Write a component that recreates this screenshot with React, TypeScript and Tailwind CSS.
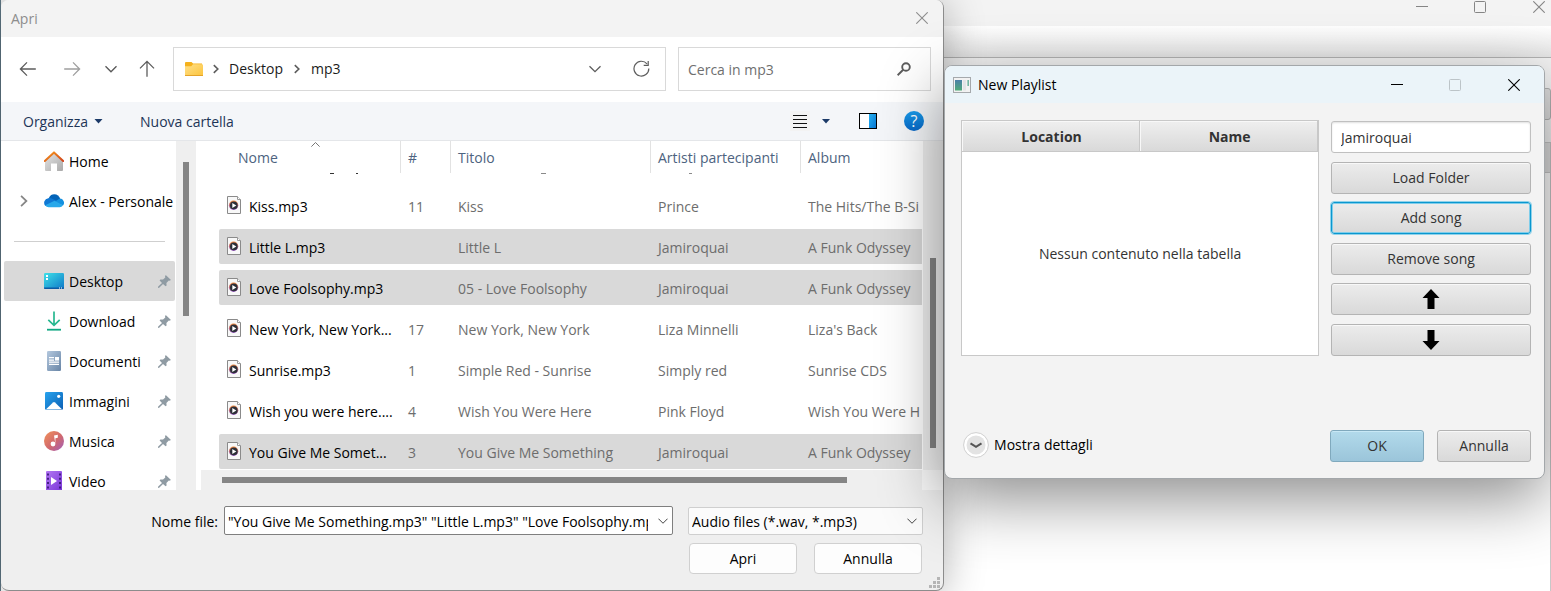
import React from 'react';

type Song = {
  name: string;
  track: string;
  title: string;
  artist: string;
  album: string;
  selected?: boolean;
};

const songs: Song[] = [
  { name: 'Kiss.mp3', track: '11', title: 'Kiss', artist: 'Prince', album: 'The Hits/The B-Si' },
  { name: 'Little L.mp3', track: '', title: 'Little L', artist: 'Jamiroquai', album: 'A Funk Odyssey', selected: true },
  { name: 'Love Foolsophy.mp3', track: '', title: '05 - Love Foolsophy', artist: 'Jamiroquai', album: 'A Funk Odyssey', selected: true },
  { name: 'New York, New York...', track: '17', title: 'New York, New York', artist: 'Liza Minnelli', album: "Liza's Back" },
  { name: 'Sunrise.mp3', track: '1', title: 'Simple Red - Sunrise', artist: 'Simply red', album: 'Sunrise CDS' },
  { name: 'Wish you were here....', track: '4', title: 'Wish You Were Here', artist: 'Pink Floyd', album: 'Wish You Were H' },
  { name: 'You Give Me Somet...', track: '3', title: 'You Give Me Something', artist: 'Jamiroquai', album: 'A Funk Odyssey', selected: true },
];

function HomeIcon() {
  return (
    <svg width="20" height="20" viewBox="0 0 20 20" aria-hidden="true">
      <defs>
        <linearGradient id="homeWall" x1="0" y1="0" x2="1" y2="1">
          <stop offset="0" stopColor="#e6e6e6" />
          <stop offset="1" stopColor="#a9a9a9" />
        </linearGradient>
        <linearGradient id="homeRoof" x1="0" y1="0" x2="1" y2="1">
          <stop offset="0" stopColor="#f79a1c" />
          <stop offset="1" stopColor="#d1421b" />
        </linearGradient>
      </defs>
      <path d="M1 9 10 1.5 19 9V19a1 1 0 0 1-1 1H13V12.5H7V20H2a1 1 0 0 1-1-1Z" fill="url(#homeWall)" />
      <path d="M.8 10 10 1.4 19.2 10" fill="none" stroke="url(#homeRoof)" strokeWidth="2" strokeLinejoin="round" strokeLinecap="round" />
    </svg>
  );
}

function CloudIcon() {
  return (
    <svg width="20" height="20" viewBox="0 0 20 20" aria-hidden="true">
      <path d="M4.5 7.5C6 4 8 3.2 10.2 3.2c3 0 5.2 1.8 6 4.6L11 12Z" fill="#0364b8" />
      <path d="M4.2 7.2A4.6 4.6 0 0 0 1.5 15L13 10 8.2 7.7A6 6 0 0 0 4.2 7.2Z" fill="#0f78d4" />
      <path d="M11 10.5 15.8 7.6A4.2 4.2 0 0 1 19 14.5L13 12Z" fill="#1490df" />
      <path d="M1.2 14.2 10.5 9.8 18.9 14.3C18.2 15.6 17 16.2 15.7 16.2H4.6c-1.5 0-2.7-.8-3.4-2Z" fill="#28a8ea" />
    </svg>
  );
}

function DesktopIcon() {
  return (
    <svg width="20" height="20" viewBox="0 0 20 20" aria-hidden="true">
      <defs>
        <linearGradient id="desk" x1="0" y1="0" x2="1" y2="1">
          <stop offset="0" stopColor="#3fe0e8" />
          <stop offset="1" stopColor="#0e78c8" />
        </linearGradient>
      </defs>
      <rect y="2" width="20" height="16" rx="1.2" fill="url(#desk)" />
      <path d="M2 4h2v2H2ZM2 7h2v2H2Z" fill="#fff" />
      <path d="M0 16.6h20v.4a1 1 0 0 1-1 1H1a1 1 0 0 1-1-1Z" fill="#0a5aa5" />
      <path d="M15 16.6h1v1h-1zM17 16.6h1v1h-1z" fill="#fff" />
    </svg>
  );
}

function DownloadIcon() {
  return (
    <svg width="20" height="20" viewBox="0 0 20 20" aria-hidden="true">
      <path d="M10 .5V14M4.3 8.8 10 14.4l5.7-5.6" fill="none" stroke="#27b890" strokeWidth="1.7" />
      <path d="M3 18.7h14" stroke="#12a883" strokeWidth="1.8" />
    </svg>
  );
}

function DocumentIcon() {
  return (
    <svg width="20" height="20" viewBox="0 0 20 20" aria-hidden="true">
      <defs>
        <linearGradient id="docs" x1="0" y1="0" x2="1" y2="1">
          <stop offset="0" stopColor="#b4c8de" />
          <stop offset="1" stopColor="#6885a6" />
        </linearGradient>
      </defs>
      <rect x="3" y="0" width="14" height="20" rx="1.2" fill="url(#docs)" />
      <path d="M5 6.7h5M5 9.2h5M5 11.2h10M5 13.3h10" stroke="#fff" strokeWidth="1.2" />
      <rect x="11" y="6" width="4" height="3.6" fill="#fff" />
    </svg>
  );
}

function PictureIcon() {
  return (
    <svg width="20" height="20" viewBox="0 0 20 20" aria-hidden="true">
      <defs>
        <linearGradient id="pics" x1="0" y1="0" x2="1" y2="1">
          <stop offset="0" stopColor="#27a3ee" />
          <stop offset="1" stopColor="#0b5fb4" />
        </linearGradient>
      </defs>
      <rect x="1" y="1" width="18" height="18" rx="1.4" fill="url(#pics)" />
      <path d="M1.8 18.6 9 11.4q1-.9 2 0l7.2 7.2Z" fill="#fff" />
      <circle cx="14.7" cy="5.3" r="1.6" fill="#fff" />
    </svg>
  );
}

function MusicIcon() {
  return (
    <svg width="20" height="20" viewBox="0 0 20 20" aria-hidden="true">
      <defs>
        <linearGradient id="music" x1="0" y1="0" x2="1" y2="1">
          <stop offset="0" stopColor="#f2925a" />
          <stop offset=".55" stopColor="#d0686e" />
          <stop offset="1" stopColor="#a05fc0" />
        </linearGradient>
      </defs>
      <circle cx="10" cy="10" r="10" fill="url(#music)" />
      <path d="M10 4.6 13.8 3.8V6.8L11.4 7.3V13" fill="#fff" />
      <circle cx="9" cy="13" r="2.4" fill="#fff" />
    </svg>
  );
}

function VideoIcon() {
  return (
    <svg width="20" height="20" viewBox="0 0 20 20" aria-hidden="true">
      <defs>
        <linearGradient id="video" x1="0" y1="0" x2="1" y2="1">
          <stop offset="0" stopColor="#b277f2" />
          <stop offset="1" stopColor="#7a35d8" />
        </linearGradient>
      </defs>
      <rect x="2" y="0" width="16" height="20" rx="1" fill="url(#video)" />
      <path d="M4 2.5V18M16 2.5V18" stroke="#3b1a78" strokeWidth="1.8" strokeDasharray="2 2.3" />
      <path d="M7 6v8l6-4Z" fill="#fff" />
    </svg>
  );
}

function PinIcon() {
  return (
    <svg width="13" height="13" viewBox="0 0 13 13" aria-hidden="true">
      <path d="M7.7 0 13 5 11.4 5.7 10.8 5.5 8.4 8 8.6 10.4 7.6 11.2 5 8.9 1.2 12.8 0 12.9.2 11.6 4 8 1.6 5.4 2.4 4.5 5 4.6 7.3 2.4 7 1.5Z" fill="#8f9ba3" />
    </svg>
  );
}

const places = [
  { label: 'Desktop', icon: <DesktopIcon />, active: true },
  { label: 'Download', icon: <DownloadIcon />, active: false },
  { label: 'Documenti', icon: <DocumentIcon />, active: false },
  { label: 'Immagini', icon: <PictureIcon />, active: false },
  { label: 'Musica', icon: <MusicIcon />, active: false },
  { label: 'Video', icon: <VideoIcon />, active: false },
];

function SongIcon() {
  return (
    <svg className="shrink-0" width="14" height="18" viewBox="0 0 14 18" aria-hidden="true">
      <defs>
        <linearGradient id="disc" x1="0" y1="0" x2="0" y2="1">
          <stop offset="0" stopColor="#f08a3c" />
          <stop offset="1" stopColor="#8d4fc0" />
        </linearGradient>
      </defs>
      <path d="M.5.5h10l3 3v14H.5Z" fill="#f8f8f8" stroke="#8a8a8a" />
      <path d="M10.5.5v3h3" fill="#fff" stroke="#9a9a9a" />
      <circle cx="6.6" cy="9.3" r="4.7" fill="url(#disc)" />
      <circle cx="6.8" cy="9.4" r="3.8" fill="#2c3038" />
      <path d="M5.3 6.9v5l4-2.5Z" fill="#fff" />
    </svg>
  );
}

function Chevron({ className, d, size = 12, w = 1.2 }: { className?: string; d: string; size?: number; w?: number }) {
  return (
    <svg className={className} width={size} height={size} viewBox="0 0 12 12" fill="none" stroke="currentColor" strokeWidth={w} aria-hidden="true">
      <path d={d} />
    </svg>
  );
}

const DOWN = 'M.5 3.2 6 8.7l5.5-5.5';
const RIGHT = 'M3.8 2.2 7.8 6l-4 3.8';

function CloseIcon() {
  return (
    <svg width="12" height="12" viewBox="0 0 12 12" stroke="currentColor" strokeWidth="1.1" aria-hidden="true">
      <path d="M.3.3l11.4 11.4M11.7.3.3 11.7" />
    </svg>
  );
}

function Sidebar() {
  return (
    <div className="flex w-[195px] shrink-0 bg-white">
      <nav aria-label="Percorsi" className="w-[175px] overflow-hidden pr-px pl-[3px]">
        <a href="#home" className="flex h-10 items-center pl-10">
          <HomeIcon />
          <span className="pt-0.5 pl-[5px]">Home</span>
        </a>
        <a href="#personale" className="flex h-10 items-center pl-3">
          <Chevron className="mr-3 text-[#858585]" size={16} w={1.3} d={RIGHT} />
          <CloudIcon />
          <span className="pt-0.5 pl-[5px] whitespace-nowrap">Alex - Personale</span>
        </a>
        <div className="flex h-10 items-center pr-[10px] pl-[10px]">
          <hr className="w-full border-[#cfcfcf]" />
        </div>
        {places.map((p) => (
          <a
            key={p.label}
            href={'#' + p.label.toLowerCase()}
            className={p.active ? 'flex h-10 items-center rounded-[2px] bg-[#d9d9d9] pr-1 pl-10' : 'flex h-10 items-center pr-1 pl-10'}
          >
            {p.icon}
            <span className="flex-1 pt-0.5 pl-[5px]">{p.label}</span>
            <PinIcon />
          </a>
        ))}
      </nav>
      <div className="flex w-5 justify-center bg-[#efefef] pt-[21px]">
        <div className="h-[154px] w-1.5 bg-[#858585]" />
      </div>
    </div>
  );
}

function FileTable() {
  const head = 'h-8 border-r border-[#e2e2e2] p-0 pt-0.5 pl-[7px] text-left font-normal text-[#4d6380]';
  const cell = 'flex h-[35px] items-center pt-0.5 pl-[7px] whitespace-nowrap overflow-hidden text-[#6d6d6d]';
  return (
    <table className="w-full table-fixed border-separate border-spacing-0">
      <colgroup>
        <col className="w-[182px]" />
        <col className="w-[50px]" />
        <col className="w-[200px]" />
        <col className="w-[150px]" />
        <col />
      </colgroup>
      <thead>
        <tr>
          <th className="relative h-8 border-r border-[#e2e2e2] p-0 pt-0.5 pl-[19px] text-left font-normal text-[#4d6380]">
            Nome
            <Chevron className="absolute top-0 left-[92px] text-[#666]" size={9} d="M.5 7.5 6 2l5.5 5.5" />
          </th>
          <th className={head}>#</th>
          <th className={head}>Titolo</th>
          <th className={head}>Artisti partecipanti</th>
          <th className="h-8 p-0 pt-0.5 pl-[7px] text-left font-normal text-[#4d6380]">Album</th>
        </tr>
      </thead>
      <tbody>
        <tr aria-hidden="true">
          <td colSpan={5} className="h-[15px] p-0 align-top">
            <svg className="block" width="480" height="2" viewBox="0 0 480 2">
              <path d="M111 .5h4M137 .5h2" stroke="#333" />
              <path d="M322 .5h5M470 .5h3" stroke="#8a8a8a" />
            </svg>
          </td>
        </tr>
        {songs.map((s) => {
          const bg = s.selected ? ' bg-[#d9d9d9]' : '';
          return (
            <tr key={s.name}>
              <td className="p-0 pb-1.5">
                <div className={'flex h-[35px] items-center gap-2 overflow-hidden rounded-l-[2px] pb-0.5 pl-2 whitespace-nowrap' + bg}>
                  <SongIcon />
                  <span className="pt-1">{s.name}</span>
                </div>
              </td>
              <td className="p-0 pb-1.5"><div className={cell + bg}>{s.track}</div></td>
              <td className="p-0 pb-1.5"><div className={cell + bg}>{s.title}</div></td>
              <td className="p-0 pb-1.5"><div className={cell + bg}>{s.artist}</div></td>
              <td className="p-0 pb-1.5"><div className={cell + bg}>{s.album}</div></td>
            </tr>
          );
        })}
      </tbody>
    </table>
  );
}

function OpenDialog() {
  return (
    <section
      aria-label="Apri"
      className="absolute top-0 left-px flex w-[60.8%] min-w-[780px] flex-col overflow-hidden rounded-lg border-r border-b border-[#8c8c8c] bg-[#efefef] shadow-[0_4px_40px_rgba(0,0,0,0.3)]"
    >
      <header className="flex h-[37px] items-center justify-between bg-[#f3f3f3] pr-[15px] pb-0.5 pl-2.5 text-[#8d8d8d]">
        <h1 className="pt-0.5">Apri</h1>
        <button type="button" aria-label="Chiudi"><CloseIcon /></button>
      </header>

      <div className="flex h-[65px] items-center bg-white pr-3 pb-0.5 pl-[18px] text-[#5c5c5c]">
        <button type="button" aria-label="Indietro">
          <svg width="18" height="18" viewBox="0 0 18 18" fill="none" stroke="currentColor" strokeWidth="1.3"><path d="M16.8 9H1.5M8 2.4 1.4 9 8 15.6" /></svg>
        </button>
        <button type="button" aria-label="Avanti" className="ml-[26px] text-[#9f9f9f]">
          <svg width="18" height="18" viewBox="0 0 18 18" fill="none" stroke="currentColor" strokeWidth="1.3"><path d="M1.2 9h15.3M10 2.4 16.6 9 10 15.6" /></svg>
        </button>
        <button type="button" aria-label="Percorsi recenti" className="ml-6">
          <Chevron d={DOWN} w={1.4} />
        </button>
        <button type="button" aria-label="Su" className="ml-[21px]">
          <svg width="18" height="18" viewBox="0 0 18 18" fill="none" stroke="currentColor" strokeWidth="1.3"><path d="M9 16.8V1.5M2 8.4 9 1.4l7 7" /></svg>
        </button>
        <div className="ml-[17px] flex h-11 flex-1 items-center border border-[#d9d9d9] pr-[15px] pl-[11px]">
          <svg width="18" height="16" viewBox="0 0 18 16" aria-hidden="true">
            <defs>
              <linearGradient id="folder" x1="0" y1="0" x2="1" y2="1">
                <stop offset="0" stopColor="#ffe08a" />
                <stop offset="1" stopColor="#fcc43c" />
              </linearGradient>
            </defs>
            <path d="M0 2a1 1 0 0 1 1-1h5.5l1.6 1.6H17v5H0Z" fill="#f5b11c" />
            <path d="M0 5.2h6.3L8 3.2h9a1 1 0 0 1 1 1V14a1 1 0 0 1-1 1H1a1 1 0 0 1-1-1Z" fill="url(#folder)" />
            <path d="M0 14.5h18" stroke="#e4a32a" />
          </svg>
          <Chevron className="mx-[7px]" size={12} w={1.6} d={RIGHT} />
          <a href="#desktop" className="text-[#1b1b1b]">Desktop</a>
          <Chevron className="mx-2" size={12} w={1.6} d={RIGHT} />
          <a href="#mp3" className="flex-1 text-[#1b1b1b]">mp3</a>
          <button type="button" aria-label="Posizioni precedenti"><Chevron d={DOWN} w={1.3} /></button>
          <button type="button" aria-label="Aggiorna" className="ml-8">
            <svg width="17" height="17" viewBox="0 0 17 17" fill="none" stroke="currentColor" strokeWidth="1.2"><path d="M15.8 8.6A7.4 7.4 0 1 1 14 3.8M15.2 1v4.4h-4.5" /></svg>
          </button>
        </div>
        <label className="ml-3 flex h-11 w-[253px] items-center border border-[#d9d9d9] pr-[19px] pl-[9px]">
          <input type="search" placeholder="Cerca in mp3" aria-label="Cerca in mp3" className="min-w-0 flex-1 bg-transparent pt-0.5 outline-none placeholder:text-[#6f6f6f]" />
          <svg width="14" height="14" viewBox="0 0 14 14" fill="none" stroke="currentColor" strokeWidth="1.9" aria-hidden="true"><circle cx="9" cy="5" r="3.8" /><path d="M6.2 7.8.6 13.2" /></svg>
        </label>
      </div>

      <div className="flex h-[39px] items-center border-b border-[#e4e6e9] bg-[#f4f6f9] pr-[19px] pl-[22px] text-[#1d3557]">
        <button type="button" className="flex items-center gap-[6px]">
          <span className="pt-0.5">Organizza</span>
          <svg width="9" height="5" viewBox="0 0 9 5" aria-hidden="true"><path d="M.5 0h8l-4 4.6Z" fill="#1b3a68" /></svg>
        </button>
        <button type="button" className="ml-[37px] pt-0.5">Nuova cartella</button>
        <button type="button" aria-label="Visualizzazione" className="ml-auto flex h-5 w-5 items-center justify-center bg-[#f3f3f3]">
          <svg width="14" height="14" viewBox="0 0 14 14" aria-hidden="true"><path d="M0 1.5h14M0 5.5h14M0 9.5h14M0 13.5h14" stroke="#111" /></svg>
        </button>
        <button type="button" aria-label="Altre opzioni" className="ml-3">
          <svg width="8" height="5" viewBox="0 0 8 5" aria-hidden="true"><path d="M0 0h8L4 4.4Z" fill="#1b3a68" /></svg>
        </button>
        <button type="button" aria-label="Riquadro anteprima" className="ml-[29px]">
          <svg width="18" height="16" viewBox="0 0 18 16" aria-hidden="true">
            <defs>
              <linearGradient id="pane" x1="0" y1="0" x2="1" y2="1">
                <stop offset="0" stopColor="#25b0f0" />
                <stop offset="1" stopColor="#0a78d4" />
              </linearGradient>
            </defs>
            <rect x=".5" y=".5" width="17" height="15" fill="#fff" stroke="#000" />
            <rect x="10" y="1" width="7" height="14" fill="url(#pane)" />
          </svg>
        </button>
        <button type="button" aria-label="Guida" className="ml-[27px] flex h-5 w-5 items-center justify-center rounded-full bg-linear-to-b from-[#1a9bea] to-[#0968c8] text-base text-white">?</button>
      </div>

      <div className="flex h-[349px]">
        <Sidebar />
        <div className="flex min-w-0 flex-1 flex-col bg-white pl-[5px]">
          <div className="flex min-h-0 flex-1">
            <div className="min-w-0 flex-1 overflow-hidden pl-[18px]">
              <FileTable />
            </div>
            <div className="ml-px flex w-5 justify-center bg-[#efefef] pt-[117px]">
              <div className="h-[190px] w-1.5 bg-[#858585]" />
            </div>
          </div>
          <div className="flex h-5 bg-[#efefef]">
            <div className="flex flex-1 items-center pr-[75px] pl-[21px]">
              <div className="h-1.5 w-full bg-[#858585]" />
            </div>
            <div className="w-[21px] bg-[#fafafa]" />
          </div>
        </div>
      </div>

      <footer className="relative flex h-[100px] flex-col items-end pt-4 pr-5">
        <div className="flex w-full items-center justify-end">
          <label htmlFor="filename" className="mr-1.5 pt-0.5 text-black">Nome file:</label>
          <div className="flex h-[29px] w-[449px] items-center rounded-[2px] border border-[#7f7f7f] bg-white pr-1 pl-[3px]">
            <input
              id="filename"
              type="text"
              defaultValue={'"You Give Me Something.mp3" "Little L.mp3" "Love Foolsophy.mp3"'}
              className="mr-2.5 min-w-0 flex-1 bg-transparent pt-0.5 text-black outline-none"
            />
            <button type="button" aria-label="Mostra nomi recenti"><Chevron className="text-[#444]" size={10} d={DOWN} /></button>
          </div>
          <div className="relative ml-[15px] w-[235px]">
            <select aria-label="Tipo file" className="h-7 w-full appearance-none rounded-[2px] border border-[#cfcfcf] bg-[#fbfbfb] pt-0.5 pl-[3px] text-black outline-none">
              <option>Audio files (*.wav, *.mp3)</option>
            </select>
            <Chevron className="pointer-events-none absolute top-[9px] right-1.5 text-[#444]" size={10} d={DOWN} />
          </div>
        </div>
        <div className="mt-2 mr-px flex gap-[17px]">
          <button type="button" className="h-[31px] w-[108px] rounded-[4px] border border-[#d0d0d0] bg-[#fdfdfd] text-black">Apri</button>
          <button type="button" className="h-[31px] w-[108px] rounded-[4px] border border-[#d0d0d0] bg-[#fdfdfd] text-black">Annulla</button>
        </div>
        <svg className="absolute right-0.5 bottom-px" width="12" height="12" viewBox="0 0 12 12" aria-hidden="true">
          <path d="M8 0h3v3H8zM4 4h3v3H4zM8 4h3v3H8zM0 8h3v3H0zM4 8h3v3H4zM8 8h3v3H8z" fill="#b5b5b5" />
        </svg>
      </footer>
    </section>
  );
}

const fxButton =
  'flex h-8 w-full items-center justify-center rounded-[3px] border border-[#b4b4b4] bg-linear-to-b from-[#ececec] to-[#d9d9d9] text-[#333] inset-shadow-[0_1px_0_#f8f8f8]';

function BlockArrow({ up = false }: { up?: boolean }) {
  return (
    <svg width="18" height="20" viewBox="0 0 18 20" aria-hidden="true">
      <path d={up ? 'M9 0 17.5 9H12.5V20H5.5V9H.5Z' : 'M9 20 17.5 11H12.5V0H5.5V11H.5Z'} fill="#000" />
    </svg>
  );
}

function PlaylistDialog() {
  return (
    <section
      aria-label="New Playlist"
      className="absolute top-[65px] left-[60.87%] flex w-[38.75%] min-w-[480px] flex-col overflow-hidden rounded-lg border border-[#a3a7aa] bg-[#f3f3f3] shadow-[0_20px_64px_rgba(0,0,0,0.45)]"
    >
      <header className="flex h-[37px] items-center bg-[#ebf4f9] pr-[24px] pl-2 text-black">
        <svg width="18" height="16" viewBox="0 0 18 16" aria-hidden="true">
          <defs>
            <linearGradient id="app" x1="0" y1="0" x2="0" y2="1">
              <stop offset="0" stopColor="#4a80a8" />
              <stop offset="1" stopColor="#4faa78" />
            </linearGradient>
          </defs>
          <rect x=".5" y=".5" width="17" height="15" fill="#f2f2f2" stroke="#a5a9ac" />
          <rect x="2" y="3" width="7" height="10.5" fill="url(#app)" />
          <rect x="10" y="3" width="3" height="10.5" fill="#e2e4e6" />
          <rect x="14.5" y="3" width="1.3" height="6" fill="#58a890" />
        </svg>
        <h2 className="flex-1 pl-[7px]">New Playlist</h2>
        <button type="button" aria-label="Riduci a icona">
          <svg width="12" height="12" viewBox="0 0 12 12"><path d="M0 5.5h12" stroke="#000" /></svg>
        </button>
        <button type="button" aria-label="Ingrandisci" disabled className="ml-[46px]">
          <svg width="12" height="12" viewBox="0 0 12 12"><rect x=".5" y=".5" width="11" height="11" rx="1" fill="none" stroke="#bcc4c8" /></svg>
        </button>
        <button type="button" aria-label="Chiudi" className="ml-[47px]"><CloseIcon /></button>
      </header>

      <div className="flex gap-3 pt-[17px] pr-[13px] pl-4">
        <div className="flex h-[236px] min-w-0 flex-1 flex-col border border-[#c8c8c8] bg-white">
          <table className="w-full table-fixed border-separate border-spacing-0">
            <thead>
              <tr className="text-[#333]">
                <th className="h-[31px] border-r border-b border-[#c8c8c8] bg-linear-to-b from-[#efefef] to-[#d9d9d9] p-0 pt-0.5 pl-0.5 font-bold inset-shadow-[1px_1px_0_#f8f8f8]">Location</th>
                <th className="h-[31px] border-r border-b border-[#c8c8c8] bg-linear-to-b from-[#efefef] to-[#d9d9d9] p-0 pt-0.5 pl-0.5 font-bold inset-shadow-[1px_1px_0_#f8f8f8]">Name</th>
              </tr>
            </thead>
          </table>
          <p className="flex flex-1 items-center justify-center text-[#333]">Nessun contenuto nella tabella</p>
        </div>
        <div className="flex w-[200px] shrink-0 flex-col justify-between pt-px">
          <input
            type="text"
            aria-label="Nome playlist"
            defaultValue="Jamiroquai"
            className="h-8 w-full rounded-[3px] border border-[#c0c0c0] bg-white px-[9px] text-[#333] inset-shadow-[0_1px_2px_#e0e0e0] outline-none"
          />
          <button type="button" className={fxButton}>Load Folder</button>
          <button
            type="button"
            className="flex h-8 w-full items-center justify-center rounded-[3px] border border-[#0a97cf] bg-linear-to-b from-[#ececec] to-[#d9d9d9] text-[#333] ring-1 ring-[#7fcdea] ring-inset outline-1 outline-[#8fd2ea]"
          >
            Add song
          </button>
          <button type="button" className={fxButton}>Remove song</button>
          <button type="button" aria-label="Sposta su" className={fxButton}><BlockArrow up /></button>
          <button type="button" aria-label="Sposta giù" className={fxButton}><BlockArrow /></button>
        </div>
      </div>

      <footer className="flex items-center pt-[74px] pr-[13px] pb-4 pl-[18px]">
        <button type="button" aria-expanded="false" className="flex items-center gap-[5px] pb-0.5 text-black">
          <svg width="26" height="26" viewBox="0 0 26 26" aria-hidden="true">
            <circle cx="13" cy="13" r="12.4" fill="#fff" stroke="#cfcfcf" />
            <circle cx="13" cy="13" r="9.5" fill="#e3e3e3" />
            <path d="M7.5 11.3 13 14.9l5.5-3.6" fill="none" stroke="#555" strokeWidth="2" />
          </svg>
          Mostra dettagli
        </button>
        <div className="ml-auto flex gap-[13px]">
          <button type="button" className="h-8 w-[94px] rounded-[3px] border border-[#80a9bd] bg-linear-to-b from-[#b2daeb] to-[#9bc5da] text-[#333] inset-shadow-[0_1px_0_#c8e8f5]">OK</button>
          <button type="button" className="h-8 w-[94px] rounded-[3px] border border-[#b4b4b4] bg-linear-to-b from-[#ececec] to-[#d9d9d9] text-[#333] inset-shadow-[0_1px_0_#f8f8f8]">Annulla</button>
        </div>
      </footer>
    </section>
  );
}

function PlayerWindow() {
  return (
    <div className="ml-px flex min-h-screen flex-col bg-white">
      <div className="flex h-[26px] items-start justify-end bg-[#f3f3f3] pt-px pr-[6px] text-[#858585]">
        <button type="button" aria-label="Riduci a icona">
          <svg width="12" height="12" viewBox="0 0 12 12"><path d="M0 5.5h12" stroke="currentColor" /></svg>
        </button>
        <button type="button" aria-label="Ripristina" className="ml-[46px]">
          <svg width="12" height="12" viewBox="0 0 12 12"><rect x=".5" y=".5" width="11" height="11" rx="1" fill="none" stroke="currentColor" /></svg>
        </button>
        <button type="button" aria-label="Chiudi" className="ml-[47px]"><CloseIcon /></button>
      </div>
      <div className="h-8 border-b border-[#b4b4b4] bg-linear-to-b from-white to-[#e6e6e6]" />
      <div className="flex flex-1 flex-col items-end bg-[#f4f4f4]">
        <div className="mt-[30px] h-8 w-8 rounded-[3px] border border-[#b4b4b4] bg-[#e0e0e0]" />
        <div className="mt-[22px] flex w-full flex-1 flex-col items-end border-t border-r border-[#c8c8c8] bg-white">
          <div className="h-[30px] w-8 border-b border-[#c8c8c8] bg-[#e0e0e0]" />
        </div>
      </div>
    </div>
  );
}

export default function App() {
  return (
    <main className="relative min-h-screen overflow-hidden bg-[#5e7684] font-['Open_Sans','Noto_Sans',sans-serif] text-sm text-black">
      <PlayerWindow />
      <OpenDialog />
      <PlaylistDialog />
    </main>
  );
}
